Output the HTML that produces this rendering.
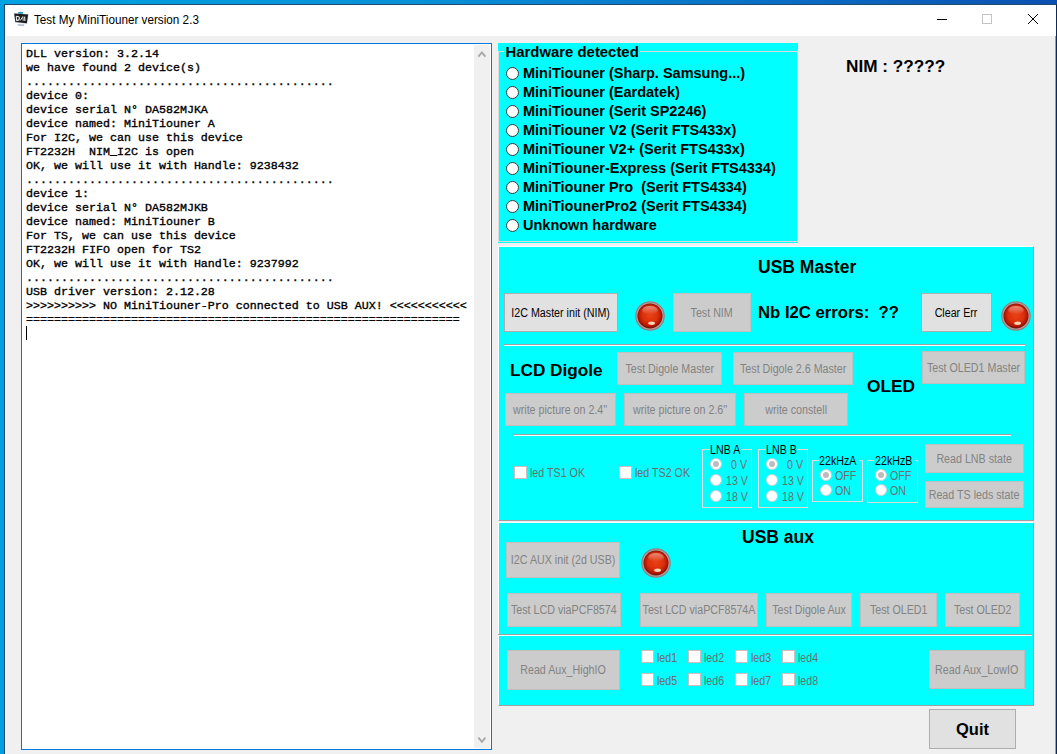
<!DOCTYPE html>
<html><head><meta charset="utf-8">
<style>
*{margin:0;padding:0;box-sizing:border-box}
html,body{width:1057px;height:754px;overflow:hidden}
body{position:relative;background:#00a0e0;font-family:"Liberation Sans",sans-serif;}
.a{position:absolute}
#topbg{left:0;top:0;width:1057px;height:4px;background:linear-gradient(90deg,#00a2e2 0%,#0890d8 40%,#0a6cc4 75%,#0b50b0 100%)}
#win{left:4px;top:4px;width:1053px;height:750px;background:#f0f0f0;border-left:1px solid #1d4a6e;border-top:1px solid #1d4a6e;border-right:1px solid #0a2a5a}
#title{left:5px;top:5px;width:1051px;height:31px;background:#fff}
#cl{left:5px;top:36px;width:1051px;height:718px;border-left:1px solid #fff;background:#f0f0f0;border-right:1px solid #a0a0a0}
.t{position:absolute;white-space:pre;line-height:1;color:#000}
.b{font-weight:bold}
.cy{position:absolute;background:#00ffff}
.pn{position:absolute;background:#00ffff;border-top:1px solid #fff;border-left:1px solid #fff;border-bottom:1px solid #a0a0a0;border-right:1px solid #a0a0a0}
.sep{position:absolute;height:2px;border-top:1px solid #a0a0a0;border-bottom:1px solid #fff}
.btn{position:absolute;background:#e1e1e1;border:1px solid #adadad;display:flex;align-items:center;justify-content:center;color:#000;font-size:12px;white-space:pre}
.dis{background:#cccccc;border-color:#bfbfbf;color:#838383}
.btn span{display:inline-block;transform:scaleX(0.855);font-size:12.5px}
.btn.big span{transform:none;font-size:16.5px;font-weight:bold}
.sx{transform:scaleX(0.855);transform-origin:0 0}
.cb{position:absolute;width:13px;height:13px;background:#fff;border:1px solid #cdbfbf}
.cbl{position:absolute;color:#6d6d6d;font-size:12.5px;white-space:pre;line-height:1;transform:scaleX(0.855);transform-origin:0 0}
.grp{position:absolute;border:1px solid #dcdcdc}
.rd{position:absolute;width:13px;height:13px;border-radius:50%;background:#fff;border:1px solid #3a3a3a}
.rdd{position:absolute;width:12px;height:12px;border-radius:50%;background:#fff;border:1px solid #cfcfcf}
.rdc::after{content:"";position:absolute;left:2px;top:2px;width:6px;height:6px;border-radius:50%;background:#bcbcbc}
.gl{color:#6d6d6d}
#log{position:absolute;left:21px;top:43px;width:471px;height:707px;border:1px solid #0078d7;background:#fff}
#logtxt{position:absolute;left:4px;top:3px;font-family:"Liberation Mono",monospace;font-weight:normal;-webkit-text-stroke:0.35px #000;font-size:11.667px;line-height:14px;white-space:pre;color:#000}
#sb{position:absolute;left:452px;top:1px;width:16px;height:703px;background:#f0f0f0}
</style></head><body>
<div class="a" id="topbg"></div>
<div class="a" id="win"></div>
<div class="a" id="title"></div>
<div class="a" id="cl"></div>
<!-- title bar -->
<svg class="a" style="left:10px;top:8px" width="22" height="22" viewBox="0 0 22 22">
 <path d="M7.5 16 L14.5 16.2 L13.8 18.3 L8.2 18.1 Z" fill="#bac6d4"/>
 <path d="M3.9 5.3 L18.8 6.2 L17.3 15.9 L5.2 14.6 Z" fill="#c9d2dd"/>
 <path d="M4.2 5.6 L18.1 6.5 L16.8 15.2 L5.4 14 Z" fill="#1c1c1c"/>
 <ellipse cx="10.6" cy="4.9" rx="2.8" ry="1.1" fill="#2c9cba"/>
 <path d="M6.3 8.2 L6.6 12.6 M6.3 8.2 Q9.6 8.3 9.4 10.4 Q9.2 12.6 6.6 12.6" fill="none" stroke="#e8e8e8" stroke-width="1.1"/>
 <path d="M10.2 12.6 L12.8 8.6 L13.2 12.8" fill="none" stroke="#e0e0e0" stroke-width="1"/>
 <path d="M14.6 8.6 L14.9 13" fill="none" stroke="#e8e8e8" stroke-width="1.1"/>
</svg>
<div class="t" style="left:34px;top:14px;font-size:12.6px;transform:scaleX(0.93);transform-origin:0 0;color:#000">Test My MiniTiouner version 2.3</div>
<div class="a" style="left:937px;top:19px;width:10px;height:1px;background:#000"></div>
<div class="a" style="left:982px;top:14px;width:10px;height:10px;border:1px solid #c4c4c4"></div>
<svg class="a" style="left:1027px;top:13px" width="12" height="12" viewBox="0 0 12 12"><path d="M1 1 L11 11 M11 1 L1 11" stroke="#000" stroke-width="1"/></svg>

<!-- log textbox -->
<div id="log">
<div id="logtxt">DLL version: 3.2.14
we have found 2 device(s)
............................................
device 0:
device serial N° DA582MJKA
device named: MiniTiouner A
For I2C, we can use this device
FT2232H  NIM_I2C is open
OK, we will use it with Handle: 9238432
............................................
device 1:
device serial N° DA582MJKB
device named: MiniTiouner B
For TS, we can use this device
FT2232H FIFO open for TS2
OK, we will use it with Handle: 9237992
............................................
USB driver version: 2.12.28
&gt;&gt;&gt;&gt;&gt;&gt;&gt;&gt;&gt;&gt; NO MiniTiouner-Pro connected to USB AUX! &lt;&lt;&lt;&lt;&lt;&lt;&lt;&lt;&lt;&lt;&lt;
==============================================================
</div>
<div class="a" style="left:4px;top:282px;width:1px;height:14px;background:#000"></div>
<div id="sb">
 <svg class="a" style="left:3px;top:5px" width="10" height="8" viewBox="0 0 10 8"><path d="M1.4 6.6 L4.9 2.4 L8.4 6.6" fill="none" stroke="#a6a6a6" stroke-width="1.8"/></svg>
 <svg class="a" style="left:3px;top:691px" width="10" height="8" viewBox="0 0 10 8"><path d="M1.4 1.6 L4.9 5.8 L8.4 1.6" fill="none" stroke="#a6a6a6" stroke-width="1.8"/></svg>
</div>
</div>
<!-- hardware groupbox -->
<div class="cy" style="left:498px;top:43px;width:300px;height:200px"></div>
<div class="a" style="left:498px;top:51px;width:300px;height:191px;border:1px solid #dcdcdc;border-right-color:#dcdcdc"></div>
<div class="cy" style="left:504px;top:44px;width:136px;height:12px"></div>
<div class="t b" style="left:505.5px;top:45px;font-size:14.9px">Hardware detected</div>
<div class="rd" style="left:506px;top:67px"></div><div class="t b" style="left:523px;top:66px;font-size:14.5px">MiniTiouner (Sharp. Samsung...)</div>
<div class="rd" style="left:506px;top:86px"></div><div class="t b" style="left:523px;top:85px;font-size:14.5px">MiniTiouner (Eardatek)</div>
<div class="rd" style="left:506px;top:105px"></div><div class="t b" style="left:523px;top:104px;font-size:14.5px">MiniTiouner (Serit SP2246)</div>
<div class="rd" style="left:506px;top:124px"></div><div class="t b" style="left:523px;top:123px;font-size:14.5px">MiniTiouner V2 (Serit FTS433x)</div>
<div class="rd" style="left:506px;top:143px"></div><div class="t b" style="left:523px;top:142px;font-size:14.5px">MiniTiouner V2+ (Serit FTS433x)</div>
<div class="rd" style="left:506px;top:162px"></div><div class="t b" style="left:523px;top:161px;font-size:14.5px">MiniTiouner-Express (Serit FTS4334)</div>
<div class="rd" style="left:506px;top:181px"></div><div class="t b" style="left:523px;top:180px;font-size:14.5px">MiniTiouner Pro  (Serit FTS4334)</div>
<div class="rd" style="left:506px;top:200px"></div><div class="t b" style="left:523px;top:199px;font-size:14.5px">MiniTiounerPro2 (Serit FTS4334)</div>
<div class="rd" style="left:506px;top:219px"></div><div class="t b" style="left:523px;top:218px;font-size:14.5px">Unknown hardware</div>

<div class="t b" style="left:846px;top:58px;font-size:17.2px">NIM : ?????</div>
<!-- USB master panel -->
<div class="pn" style="left:498px;top:246px;width:536px;height:275px"></div>
<div class="t b" style="left:758px;top:259px;font-size:17.5px">USB Master</div>
<div class="btn" style="left:504px;top:293px;width:114px;height:39px"><span>I2C Master init (NIM)</span></div>
<svg class="a led" style="left:635px;top:301px" width="30" height="30" viewBox="0 0 30 30"><use href="#ledsym"/></svg>
<div class="btn dis" style="left:673px;top:293px;width:78px;height:39px"><span>Test NIM</span></div>
<div class="t b" style="left:758px;top:305px;font-size:16.7px">Nb I2C errors:  ??</div>
<div class="btn" style="left:921px;top:293px;width:71px;height:39px"><span>Clear Err</span></div>
<svg class="a led" style="left:1001px;top:301px" width="30" height="30" viewBox="0 0 30 30"><use href="#ledsym"/></svg>
<div class="sep" style="left:504px;top:344px;width:521px"></div>
<div class="t b" style="left:510px;top:362px;font-size:17.2px">LCD Digole</div>
<div class="btn dis" style="left:617px;top:352px;width:105px;height:33px"><span>Test Digole Master</span></div>
<div class="btn dis" style="left:733px;top:352px;width:120px;height:33px"><span>Test Digole 2.6 Master</span></div>
<div class="t b" style="left:867px;top:378px;font-size:17.3px">OLED</div>
<div class="btn dis" style="left:922px;top:351px;width:103px;height:33px"><span>Test OLED1 Master</span></div>
<div class="btn dis" style="left:505px;top:393px;width:111px;height:33px"><span>write picture on 2.4''</span></div>
<div class="btn dis" style="left:624px;top:393px;width:112px;height:33px"><span>write picture on 2.6''</span></div>
<div class="btn dis" style="left:744px;top:393px;width:104px;height:33px"><span>write constell</span></div>
<div class="sep" style="left:514px;top:434px;width:497px"></div>
<div class="cb" style="left:514px;top:466px"></div><div class="cbl" style="left:530px;top:467px">led TS1 OK</div>
<div class="cb" style="left:619px;top:466px"></div><div class="cbl" style="left:635px;top:467px">led TS2 OK</div>
<!-- LNB groups -->
<div class="grp" style="left:702px;top:449px;width:50px;height:59px"></div>
<div class="cy" style="left:710px;top:444px;width:31px;height:10px"></div>
<div class="t sx" style="left:710px;top:444px;font-size:12.5px">LNB A</div>
<div class="rdd rdc" style="left:710px;top:458px"></div><div class="t gl sx" style="left:731px;top:459px;font-size:12.5px">0 V</div>
<div class="rdd" style="left:710px;top:474px"></div><div class="t gl sx" style="left:726px;top:475px;font-size:12.5px">13 V</div>
<div class="rdd" style="left:710px;top:490px"></div><div class="t gl sx" style="left:726px;top:491px;font-size:12.5px">18 V</div>
<div class="grp" style="left:758px;top:449px;width:50px;height:59px"></div>
<div class="cy" style="left:766px;top:444px;width:31px;height:10px"></div>
<div class="t sx" style="left:766px;top:444px;font-size:12.5px">LNB B</div>
<div class="rdd rdc" style="left:766px;top:458px"></div><div class="t gl sx" style="left:787px;top:459px;font-size:12.5px">0 V</div>
<div class="rdd" style="left:766px;top:474px"></div><div class="t gl sx" style="left:782px;top:475px;font-size:12.5px">13 V</div>
<div class="rdd" style="left:766px;top:490px"></div><div class="t gl sx" style="left:782px;top:491px;font-size:12.5px">18 V</div>
<div class="grp" style="left:812px;top:460px;width:51px;height:42px"></div>
<div class="cy" style="left:819px;top:455px;width:40px;height:10px"></div>
<div class="t sx" style="left:819px;top:455px;font-size:12.5px">22kHzA</div>
<div class="rdd rdc" style="left:820px;top:469px"></div><div class="t gl sx" style="left:835px;top:470px;font-size:12.5px">OFF</div>
<div class="rdd" style="left:820px;top:484px"></div><div class="t gl sx" style="left:835px;top:485px;font-size:12.5px">ON</div>
<div class="grp" style="left:867px;top:460px;width:51px;height:43px"></div>
<div class="cy" style="left:874px;top:455px;width:41px;height:10px"></div>
<div class="t sx" style="left:875px;top:455px;font-size:12.5px">22kHzB</div>
<div class="rdd rdc" style="left:875px;top:469px"></div><div class="t gl sx" style="left:890px;top:470px;font-size:12.5px">OFF</div>
<div class="rdd" style="left:875px;top:484px"></div><div class="t gl sx" style="left:890px;top:485px;font-size:12.5px">ON</div>
<div class="btn dis" style="left:925px;top:444px;width:99px;height:29px"><span>Read LNB state</span></div>
<div class="btn dis" style="left:925px;top:481px;width:99px;height:27px"><span>Read TS leds state</span></div>

<!-- USB aux panel -->
<div class="pn" style="left:498px;top:522px;width:536px;height:184px"></div>
<div class="t b" style="left:742px;top:529px;font-size:17.5px">USB aux</div>
<div class="btn dis" style="left:506px;top:542px;width:114px;height:36px"><span>I2C AUX init (2d USB)</span></div>
<svg class="a led" style="left:641px;top:548px" width="30" height="30" viewBox="0 0 30 30"><use href="#ledsym"/></svg>
<div class="btn dis" style="left:507px;top:593px;width:114px;height:34px"><span>Test LCD viaPCF8574</span></div>
<div class="btn dis" style="left:640px;top:593px;width:118px;height:34px"><span>Test LCD viaPCF8574A</span></div>
<div class="btn dis" style="left:766px;top:593px;width:86px;height:34px"><span>Test Digole Aux</span></div>
<div class="btn dis" style="left:860px;top:593px;width:77px;height:34px"><span>Test OLED1</span></div>
<div class="btn dis" style="left:945px;top:593px;width:75px;height:34px"><span>Test OLED2</span></div>
<div class="sep" style="left:498px;top:634px;width:534px"></div>
<div class="btn dis" style="left:507px;top:650px;width:113px;height:40px"><span>Read Aux_HighIO</span></div>
<div class="cb" style="left:641px;top:650px"></div><div class="cbl" style="left:657px;top:652px">led1</div>
<div class="cb" style="left:688px;top:650px"></div><div class="cbl" style="left:704px;top:652px">led2</div>
<div class="cb" style="left:735px;top:650px"></div><div class="cbl" style="left:751px;top:652px">led3</div>
<div class="cb" style="left:782px;top:650px"></div><div class="cbl" style="left:798px;top:652px">led4</div>
<div class="cb" style="left:641px;top:673px"></div><div class="cbl" style="left:657px;top:675px">led5</div>
<div class="cb" style="left:688px;top:673px"></div><div class="cbl" style="left:704px;top:675px">led6</div>
<div class="cb" style="left:735px;top:673px"></div><div class="cbl" style="left:751px;top:675px">led7</div>
<div class="cb" style="left:782px;top:673px"></div><div class="cbl" style="left:798px;top:675px">led8</div>
<div class="btn dis" style="left:929px;top:650px;width:96px;height:39px"><span>Read Aux_LowIO</span></div>

<div class="btn big" style="left:929px;top:709px;width:87px;height:40px"><span>Quit</span></div>

<svg width="0" height="0" style="position:absolute">
 <defs>
  <radialGradient id="lg" cx="50%" cy="45%" r="55%">
   <stop offset="0%" stop-color="#ea4216"/>
   <stop offset="60%" stop-color="#da300c"/>
   <stop offset="88%" stop-color="#b81804"/>
   <stop offset="100%" stop-color="#801000"/>
  </radialGradient>
  <linearGradient id="lh" x1="0" y1="0" x2="0" y2="1">
   <stop offset="0%" stop-color="#fff" stop-opacity="0.45"/>
   <stop offset="100%" stop-color="#fff" stop-opacity="0"/>
  </linearGradient>
  <symbol id="ledsym" viewBox="0 0 30 30">
   <circle cx="15" cy="15" r="14.8" fill="#98807e"/>
   <circle cx="15" cy="15" r="13.6" fill="#b89e9c"/>
   <circle cx="15" cy="15" r="12.5" fill="#7e1a10"/>
   <circle cx="15" cy="15" r="11.7" fill="url(#lg)"/>
   <ellipse cx="15" cy="9.2" rx="7.8" ry="4.2" fill="url(#lh)"/>
   <ellipse cx="16.6" cy="22.3" rx="3.4" ry="1.7" fill="#ffe8c8" opacity="0.9"/>
  </symbol>
 </defs>
</svg>
</body></html>
